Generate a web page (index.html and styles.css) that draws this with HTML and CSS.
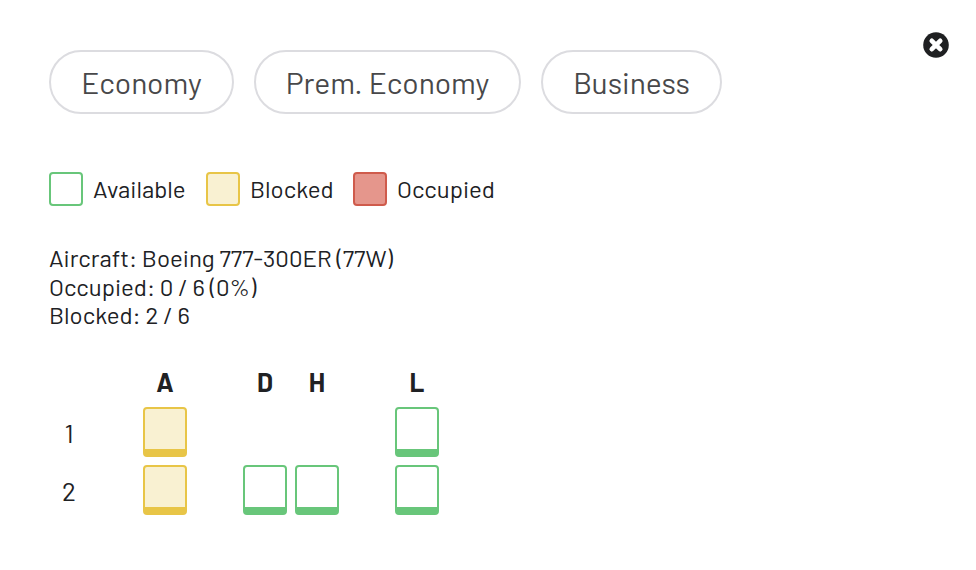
FILE: index.html
```html
<!DOCTYPE html>
<html lang="en">
<head>
<meta charset="utf-8">
<title>Seat map</title>
<link rel="stylesheet" href="styles.css">
</head>
<body>
<button class="close" aria-label="Close"><svg viewBox="0 0 26 26"><circle cx="13" cy="13" r="12.8" fill="#1f2022"/><path d="M8.8 8.8l8.4 8.4M17.2 8.8l-8.4 8.4" stroke="#fff" stroke-width="4.7" stroke-linecap="round"/></svg></button>
<main class="seatmap">
  <nav class="cabins">
    <button class="cabin economy">Economy</button>
    <button class="cabin premium">Prem. Economy</button>
    <button class="cabin business">Business</button>
  </nav>
  <div class="legend">
    <i class="swatch available"></i><span class="label l1">Available</span>
    <i class="swatch blocked"></i><span class="label l2">Blocked</span>
    <i class="swatch occupied"></i><span class="label l3">Occupied</span>
  </div>
  <div class="info">
    <div>Aircraft: Boeing 777-300ER (77W)</div>
    <div>Occupied: 0 / 6 (0%)</div>
    <div>Blocked: 2 / 6</div>
  </div>
  <div class="grid">
    <b></b><b></b><b>A</b><b></b><b>D</b><b>H</b><b></b><b>L</b>
    <span>1</span><i></i><i class="seat blocked"></i><i></i><i></i><i></i><i></i><i class="seat available"></i>
    <span>2</span><i></i><i class="seat blocked"></i><i></i><i class="seat available"></i><i class="seat available"></i><i></i><i class="seat available"></i>
  </div>
</main>
</body>
</html>
```
FILE: styles.css
```css
* { box-sizing: border-box; }
body {
  margin: 0;
  background: #fff;
  color: #202124;
  font: 24px/28.5px Barlow, Roboto, sans-serif;
}
button { padding: 0; font: inherit; background: none; }
.close { position: absolute; top: 32px; left: 923px; width: 26px; height: 26px; border: 0; }
.close svg { display: block; width: 26px; height: 26px; fill: none; }
.seatmap { padding: 50px 49px 0; }
.cabins { display: flex; gap: 20px; }
.cabin {
  height: 64px;
  border: 2px solid #dcdce0;
  border-radius: 32px;
  color: #48484a;
  font-size: 30px;
  white-space: nowrap;
}
.economy { width: 185px; }
.premium { width: 267px; }
.business { width: 181px; }
.legend { display: flex; align-items: center; height: 34px; margin-top: 58px; }
.swatch { width: 34px; height: 34px; margin-right: 10px; border: 2px solid; border-radius: 4px; }
.label { white-space: nowrap; padding-top: 1px; }
.l1 { width: 113px; }
.l2 { width: 103px; }
.available { border-color: #68c67a; background: #fff; }
.blocked { border-color: #e8c547; background: #f9f1d2; }
.occupied { border-color: #cf5b4c; background: #e5968c; }
.info { margin-top: 38px; white-space: nowrap; }
.grid {
  display: grid;
  grid-template-columns: 40px 38px 44px 40px 44px 44px 40px 44px;
  grid-template-rows: 36px 50px 50px;
  gap: 8px;
  margin-top: 33.5px;
  align-items: center;
  text-align: center;
  font-size: 26px;
}
.grid b, .grid span { padding-top: 3px; }
.seat { width: 44px; height: 50px; border: 2px solid; border-bottom-width: 8px; border-radius: 4px; }
.seat.available { border-color: #68c67a; }
.seat.blocked { border-color: #e8c547; }
```
